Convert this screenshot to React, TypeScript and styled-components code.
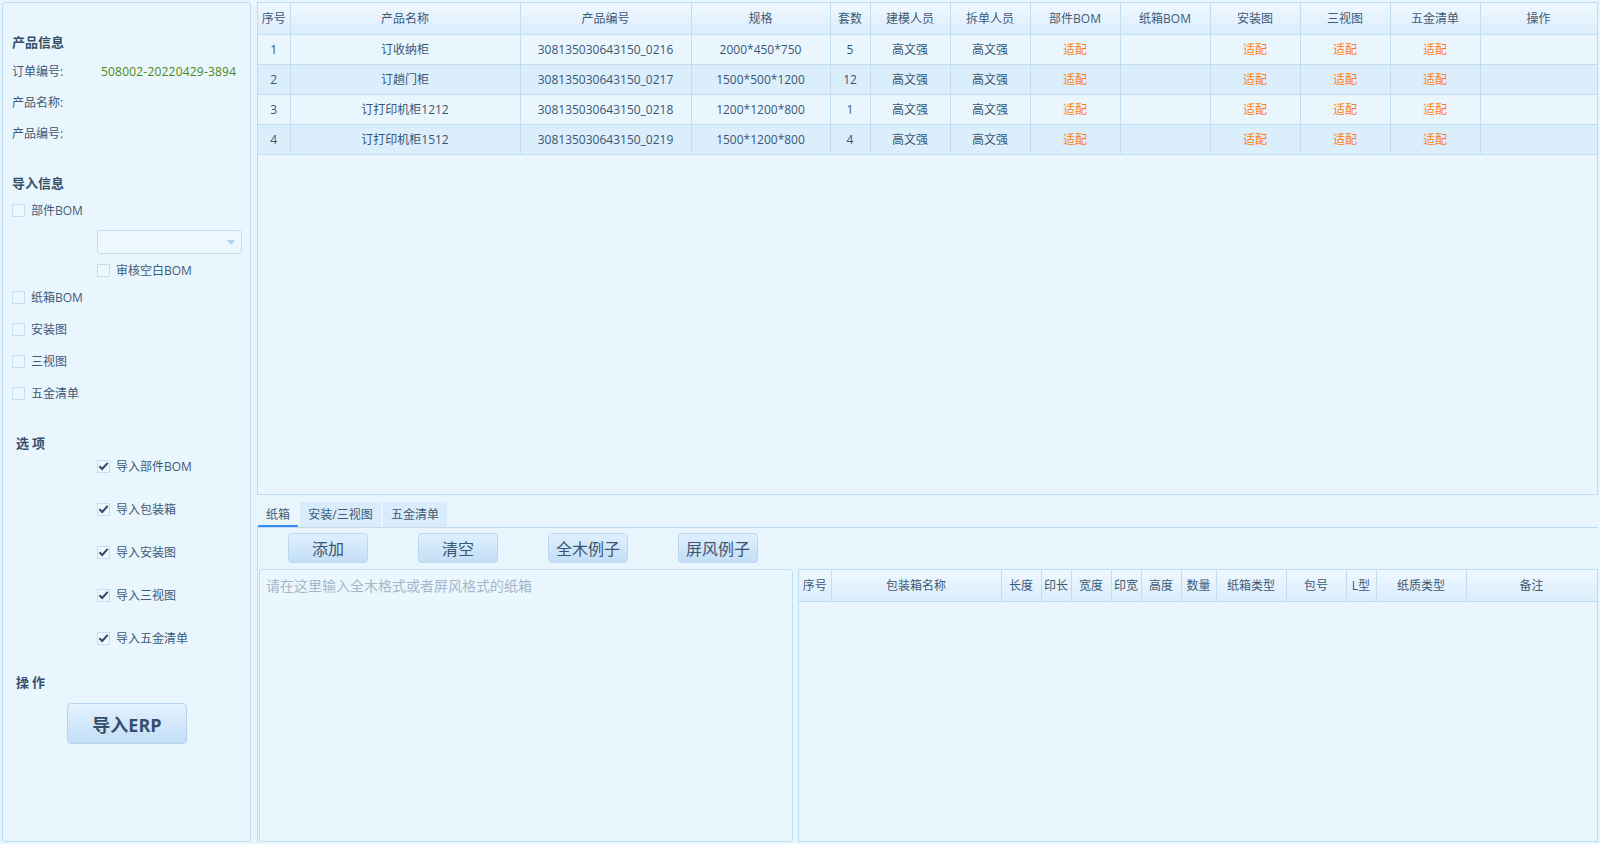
import React from "react";
import styled, { createGlobalStyle } from "styled-components";

const GlobalStyle = createGlobalStyle`
  html, body { margin: 0; padding: 0; background: #e9f5fd; }
  body {
    font-family: "Open Sans", "Noto Sans CJK SC", sans-serif;
    font-size: 12px;
    color: #3a5673;
  }
  * { box-sizing: border-box; }
`;

const Page = styled.div`
  display: flex;
  gap: 6px;
  padding: 2px;
  width: 1600px;
  height: 844px;
  background: #e9f5fd;
`;

const Side = styled.aside`
  width: 249px;
  flex: none;
  display: flex;
  flex-direction: column;
  border: 1px solid #bedcf1;
  border-radius: 3px;
  background: #eaf6fe;
  padding: 0 0 0 9px;
`;

const SectionTitle = styled.div<{ $top: number; $indent?: number }>`
  height: 20px;
  line-height: 20px;
  margin-top: ${(p) => p.$top}px;
  padding-left: ${(p) => p.$indent ?? 0}px;
  font-size: 13px;
  font-weight: 700;
  color: #34506c;
  letter-spacing: ${(p) => (p.$indent ? "3px" : "0")};
`;

const InfoRow = styled.div`
  height: 31px;
  line-height: 31px;
  display: flex;
`;

const InfoLabel = styled.span`
  width: 89px;
  color: #3e5a77;
`;

const InfoValue = styled.span`
  color: #4f8a0f;
  letter-spacing: 0.2px;
`;

const CheckRow = styled.label<{ $h?: number; $indent?: number; $top?: number }>`
  display: flex;
  align-items: center;
  gap: 6px;
  height: ${(p) => p.$h ?? 20}px;
  margin-top: ${(p) => p.$top ?? 0}px;
  padding-left: ${(p) => p.$indent ?? 0}px;
  color: #3e5a77;
`;

const Box = styled.span`
  width: 13px;
  height: 13px;
  flex: none;
  border: 1px solid #c4dff2;
  background: #edf7fe;
  display: inline-flex;
  align-items: center;
  justify-content: center;
`;

const Select = styled.div`
  margin: 10px 0 0 85px;
  width: 145px;
  height: 24px;
  border: 1px solid #c3def2;
  border-radius: 3px;
  background: #edf7fe;
  display: flex;
  align-items: center;
  justify-content: flex-end;
  padding-right: 6px;
`;

const Caret = styled.span`
  width: 0;
  height: 0;
  border-left: 4px solid transparent;
  border-right: 4px solid transparent;
  border-top: 5px solid #b3d2ea;
`;

const OptionList = styled.div`
  display: flex;
  flex-direction: column;
  gap: 23px;
  margin-top: 3px;
`;

const ErpButton = styled.button`
  margin: 11px 0 0 55px;
  width: 120px;
  height: 41px;
  border: 1px solid #b5d5ee;
  border-radius: 4px;
  background: linear-gradient(#e3f2fe, #c3def6);
  font-family: "Open Sans", "Noto Sans CJK SC", sans-serif;
  font-size: 18px;
  font-weight: 700;
  color: #34506c;
  padding: 0;
`;

const Main = styled.main`
  flex: 1;
  display: flex;
  flex-direction: column;
  min-width: 0;
`;

const GridBox = styled.div<{ $h?: number }>`
  border: 1px solid #bddbf1;
  background: #eaf6fe;
  ${(p) => (p.$h ? `height: ${p.$h}px; flex: none;` : "flex: 1;")}
  overflow: hidden;
`;

const Grid = styled.table`
  width: 100%;
  table-layout: fixed;
  border-collapse: collapse;
`;

const Th = styled.th<{ $h: number }>`
  height: ${(p) => p.$h}px;
  font-weight: 400;
  color: #3e5a77;
  background: linear-gradient(#eff8ff, #dbedfc);
  border: 1px solid #c1ddf2;
  border-top: none;
  padding: 0;
  text-align: center;
  white-space: nowrap;
  overflow: hidden;
  &:first-child { border-left: none; }
`;

const Tr = styled.tr<{ $alt: boolean }>`
  background: ${(p) => (p.$alt ? "#dbeefc" : "#eaf6fe")};
`;

const Td = styled.td<{ $fit?: boolean }>`
  height: 30px;
  border: 1px solid #c1ddf2;
  padding: 0;
  text-align: center;
  white-space: nowrap;
  color: ${(p) => (p.$fit ? "#ff7f0e" : "#3a5673")};
  &:first-child { border-left: none; }
`;

const TabBar = styled.div`
  margin-top: 7px;
  height: 25px;
  display: flex;
  gap: 2px;
  padding-left: 1px;
`;

const Tab = styled.div<{ $active?: boolean; $w: number }>`
  width: ${(p) => p.$w}px;
  height: 25px;
  line-height: 25px;
  text-align: center;
  color: #3e5a77;
  background: ${(p) => (p.$active ? "transparent" : "#d9ecfb")};
  border-bottom: ${(p) => (p.$active ? "2px solid #3a8cf2" : "none")};
`;

const TabPanel = styled.section`
  flex: 1;
  display: flex;
  flex-direction: column;
  border-top: 1px solid #bddbf1;
  border-left: 1px solid #bddbf1;
  min-height: 0;
`;

const ButtonRow = styled.div`
  display: flex;
  gap: 50px;
  padding: 5px 0 0 30px;
  height: 41px;
  flex: none;
`;

const ActionButton = styled.button`
  width: 80px;
  height: 30px;
  border: 1px solid #b9d8f0;
  border-radius: 4px;
  background: linear-gradient(#dff0fe, #c3def6);
  font-family: "Open Sans", "Noto Sans CJK SC", sans-serif;
  font-size: 16px;
  color: #3a5673;
  padding: 0;
`;

const Lower = styled.div`
  flex: 1;
  display: flex;
  gap: 5px;
  padding: 0 0 0 1px;
  min-height: 0;
`;

const TextArea = styled.div`
  width: 534px;
  flex: none;
  border: 1px solid #c3def2;
  border-radius: 3px;
  background: #ebf7fe;
  padding: 5px 6px;
  font-size: 14px;
  color: #a3b7ca;
`;

const mainCols = [32, 230, 171, 139, 40, 80, 80, 90, 90, 90, 90, 90, 117];
const mainHead = ["序号", "产品名称", "产品编号", "规格", "套数", "建模人员", "拆单人员", "部件BOM", "纸箱BOM", "安装图", "三视图", "五金清单", "操作"];
const rows = [
  ["1", "订收纳柜", "308135030643150_0216", "2000*450*750", "5"],
  ["2", "订趟门柜", "308135030643150_0217", "1500*500*1200", "12"],
  ["3", "订打印机柜1212", "308135030643150_0218", "1200*1200*800", "1"],
  ["4", "订打印机柜1512", "308135030643150_0219", "1500*1200*800", "4"],
];

const subCols = [32, 170, 40, 30, 40, 30, 40, 35, 70, 60, 30, 90, 131];
const subHead = ["序号", "包装箱名称", "长度", "印长", "宽度", "印宽", "高度", "数量", "纸箱类型", "包号", "L型", "纸质类型", "备注"];

const Check = () => (
  <svg width="12" height="12" viewBox="0 0 12 12">
    <path d="M1.5 6.2 L4.6 9.2 L10.6 2.6" fill="none" stroke="#2e4b6a" strokeWidth="2.2" />
  </svg>
);

const CheckBox = ({ checked }: { checked?: boolean }) => <Box>{checked ? <Check /> : null}</Box>;

export default function App() {
  return (
    <>
      <GlobalStyle />
      <Page>
        <Side>
          <SectionTitle $top={29}>产品信息</SectionTitle>
          <div style={{ height: 4 }} />
          <InfoRow>
            <InfoLabel>订单编号:</InfoLabel>
            <InfoValue>508002-20220429-3894</InfoValue>
          </InfoRow>
          <InfoRow>
            <InfoLabel>产品名称:</InfoLabel>
          </InfoRow>
          <InfoRow>
            <InfoLabel>产品编号:</InfoLabel>
          </InfoRow>
          <SectionTitle $top={24}>导入信息</SectionTitle>
          <CheckRow $top={7}>
            <CheckBox />
            部件BOM
          </CheckRow>
          <Select>
            <Caret />
          </Select>
          <CheckRow $top={6} $indent={85}>
            <CheckBox />
            审核空白BOM
          </CheckRow>
          <CheckRow $h={32} $top={1}>
            <CheckBox />
            纸箱BOM
          </CheckRow>
          <CheckRow $h={32}>
            <CheckBox />
            安装图
          </CheckRow>
          <CheckRow $h={32}>
            <CheckBox />
            三视图
          </CheckRow>
          <CheckRow $h={32}>
            <CheckBox />
            五金清单
          </CheckRow>
          <SectionTitle $top={24} $indent={4}>选项</SectionTitle>
          <OptionList>
            {["导入部件BOM", "导入包装箱", "导入安装图", "导入三视图", "导入五金清单"].map((t) => (
              <CheckRow key={t} $indent={85}>
                <CheckBox checked />
                {t}
              </CheckRow>
            ))}
          </OptionList>
          <SectionTitle $top={24} $indent={4}>操作</SectionTitle>
          <ErpButton>导入ERP</ErpButton>
        </Side>
        <Main>
          <GridBox $h={493}>
            <Grid>
              <colgroup>
                {mainCols.map((w, i) => (
                  <col key={i} style={{ width: w }} />
                ))}
              </colgroup>
              <thead>
                <tr>
                  {mainHead.map((h) => (
                    <Th key={h} $h={31}>{h}</Th>
                  ))}
                </tr>
              </thead>
              <tbody>
                {rows.map((r, i) => (
                  <Tr key={r[0]} $alt={i % 2 === 1}>
                    {r.map((c, j) => (
                      <Td key={j}>{c}</Td>
                    ))}
                    <Td>高文强</Td>
                    <Td>高文强</Td>
                    <Td $fit>适配</Td>
                    <Td />
                    <Td $fit>适配</Td>
                    <Td $fit>适配</Td>
                    <Td $fit>适配</Td>
                    <Td />
                  </Tr>
                ))}
              </tbody>
            </Grid>
          </GridBox>
          <TabBar>
            <Tab $active $w={40}>纸箱</Tab>
            <Tab $w={81}>安装/三视图</Tab>
            <Tab $w={64}>五金清单</Tab>
          </TabBar>
          <TabPanel>
            <ButtonRow>
              <ActionButton>添加</ActionButton>
              <ActionButton>清空</ActionButton>
              <ActionButton>全木例子</ActionButton>
              <ActionButton>屏风例子</ActionButton>
            </ButtonRow>
            <Lower>
              <TextArea>请在这里输入全木格式或者屏风格式的纸箱</TextArea>
              <GridBox>
                <Grid>
                  <colgroup>
                    {subCols.map((w, i) => (
                      <col key={i} style={{ width: w }} />
                    ))}
                  </colgroup>
                  <thead>
                    <tr>
                      {subHead.map((h) => (
                        <Th key={h} $h={31}>{h}</Th>
                      ))}
                    </tr>
                  </thead>
                </Grid>
              </GridBox>
            </Lower>
          </TabPanel>
        </Main>
      </Page>
    </>
  );
}
